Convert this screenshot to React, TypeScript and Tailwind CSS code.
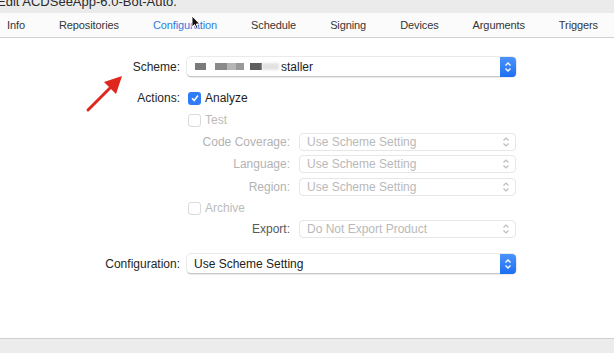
import React from "react";

const tabs = [
    "Info",
    "Repositories",
    "Configuration",
    "Schedule",
    "Signing",
    "Devices",
    "Arguments",
    "Triggers",
];

const Stepper = ({ disabled }: { disabled?: boolean }) =>
    disabled ? (
        <svg width="8" height="12" viewBox="0 0 8 12" className="mr-[5px]">
            <path d="M1.5 4.5 L4 2 L6.5 4.5" fill="none" stroke="#bdbdbd" strokeWidth="1.2" />
            <path d="M1.5 7.5 L4 10 L6.5 7.5" fill="none" stroke="#bdbdbd" strokeWidth="1.2" />
        </svg>
    ) : (
        <div className="flex h-[20px] w-[16px] items-center justify-center rounded-r-[4px] bg-gradient-to-b from-[#4b93fb] to-[#1b6ef3]">
            <svg width="8" height="12" viewBox="0 0 8 12">
                <path d="M1.5 4.5 L4 2 L6.5 4.5" fill="none" stroke="#fff" strokeWidth="1.3" />
                <path d="M1.5 7.5 L4 10 L6.5 7.5" fill="none" stroke="#fff" strokeWidth="1.3" />
            </svg>
        </div>
    );

const Popup = ({
    children,
    width,
    disabled,
}: {
    children: React.ReactNode;
    width: string;
    disabled?: boolean;
}) =>
    disabled ? (
        <div
            className={`flex h-[18px] ${width} items-center justify-between rounded-[4px] border border-[#e6e6e6] bg-white pl-[7px] text-[#b9b9b9]`}
        >
            <span>{children}</span>
            <Stepper disabled />
        </div>
    ) : (
        <div
            className={`flex h-[20px] ${width} items-center justify-between rounded-[4px] border-b border-[#c8c8c8] bg-white shadow-[0_0_0_0.5px_#d6d6d6] text-[#222]`}
        >
            <span className="pl-[7px]">{children}</span>
            <Stepper />
        </div>
    );

const Checkbox = ({ checked }: { checked?: boolean }) =>
    checked ? (
        <div className="flex h-[13px] w-[13px] items-center justify-center rounded-[3px] bg-[#2f7cf6]">
            <svg width="10" height="10" viewBox="0 0 10 10">
                <path d="M2 5.2 L4.2 7.5 L8 2.5" fill="none" stroke="#fff" strokeWidth="1.5" />
            </svg>
        </div>
    ) : (
        <div className="h-[13px] w-[13px] rounded-[3px] border border-[#dadada] bg-white" />
    );

export default function App() {
    return (
        <div
            className="relative flex h-[353px] w-[614px] flex-col overflow-hidden bg-white text-[12px]"
            style={{ fontFamily: '"Liberation Sans", Arial, sans-serif' }}
        >
            <div className="h-[13px] overflow-hidden bg-[#ebebeb]">
                <div className="-mt-[8px] -ml-[3px] text-[13px] text-[#2a2a2a]">
                    Edit ACDSeeApp-6.0-Bot-Auto.
                </div>
            </div>
            <div className="flex h-[25px] items-center gap-[34px] border-b border-[#d2d2d2] bg-[#fbfbfb] pl-[7px] text-[11px] tracking-[-0.1px] text-[#353535]">
                {tabs.map((t) => (
                    <span
                        key={t}
                        className={t === "Configuration" ? "text-[#2f7ddf]" : ""}
                    >
                        {t}
                    </span>
                ))}
            </div>

            <div className="flex flex-1 flex-col text-[#262626]">
                <div className="mt-[19px] flex items-center">
                    <span className="w-[180px] text-right">Scheme:</span>
                    <div className="ml-[7px]">
                        <Popup width="w-[329px]">
                            <span className="inline-flex items-center">
                                <span className="ml-[1px] inline-block h-[7px] w-[11px] bg-[#7a7a7a] blur-[0.6px]" />
                                <span className="ml-[9px] inline-block h-[7px] w-[12px] bg-[#8a8a8a] blur-[0.6px]" />
                                <span className="inline-block h-[7px] w-[9px] bg-[#b5b5b5] blur-[0.6px]" />
                                <span className="inline-block h-[7px] w-[8px] bg-[#999] blur-[0.6px]" />
                                <span className="ml-[6px] inline-block h-[7px] w-[12px] bg-[#5e5e5e] blur-[0.6px]" />
                                <span className="inline-block h-[7px] w-[17px] bg-[#e2e2e2] blur-[1px]" />
                                <span className="ml-[2px]">staller</span>
                            </span>
                        </Popup>
                    </div>
                </div>

                <div className="mt-[13px] flex h-[16px] items-center">
                    <span className="w-[180px] text-right">Actions:</span>
                    <div className="ml-[8px] flex items-center gap-[4px]">
                        <Checkbox checked />
                        <span className="text-[#1e1e1e]">Analyze</span>
                    </div>
                </div>

                <div className="mt-[6px] flex h-[16px] items-center pl-[188px]">
                    <Checkbox />
                    <span className="ml-[4px] text-[#bcbcbc]">Test</span>
                </div>

                <div className="mt-[5px] flex items-center">
                    <span className="w-[290px] text-right text-[#b3b3b3]">Code Coverage:</span>
                    <div className="ml-[9px]">
                        <Popup width="w-[217px]" disabled>
                            Use Scheme Setting
                        </Popup>
                    </div>
                </div>

                <div className="mt-[4px] flex items-center">
                    <span className="w-[290px] text-right text-[#b3b3b3]">Language:</span>
                    <div className="ml-[9px]">
                        <Popup width="w-[217px]" disabled>
                            Use Scheme Setting
                        </Popup>
                    </div>
                </div>

                <div className="mt-[5px] flex items-center">
                    <span className="w-[290px] text-right text-[#b3b3b3]">Region:</span>
                    <div className="ml-[9px]">
                        <Popup width="w-[217px]" disabled>
                            Use Scheme Setting
                        </Popup>
                    </div>
                </div>

                <div className="mt-[4px] flex h-[16px] items-center pl-[188px]">
                    <Checkbox />
                    <span className="ml-[4px] text-[#bcbcbc]">Archive</span>
                </div>

                <div className="mt-[4px] flex items-center">
                    <span className="w-[290px] text-right text-[#595959]">Export:</span>
                    <div className="ml-[9px]">
                        <Popup width="w-[217px]" disabled>
                            Do Not Export Product
                        </Popup>
                    </div>
                </div>

                <div className="mt-[16px] flex items-center">
                    <span className="w-[180px] text-right">Configuration:</span>
                    <div className="ml-[7px]">
                        <Popup width="w-[329px]">Use Scheme Setting</Popup>
                    </div>
                </div>
            </div>

            <div className="h-[15px] border-t border-[#cfcfcf] bg-[#ececec]" />

            {/* red annotation arrow */}
            <svg
                className="absolute left-[83px] top-[71px]"
                width="46"
                height="44"
                viewBox="0 0 46 44"
            >
                <path d="M5 39 L30 14" stroke="#e0271f" strokeWidth="3" strokeLinecap="round" />
                <path d="M39 5 L21 11 L33 23 Z" fill="#e0271f" />
            </svg>

            {/* mouse cursor */}
            <svg
                className="absolute left-[191px] top-[15px]"
                width="10"
                height="15"
                viewBox="0 0 10 15"
            >
                <path
                    d="M1 1 L1 12 L3.6 9.6 L5.4 13.6 L7 12.9 L5.3 9 L8.8 9 Z"
                    fill="#111"
                    stroke="#fff"
                    strokeWidth="0.9"
                />
            </svg>
        </div>
    );
}
